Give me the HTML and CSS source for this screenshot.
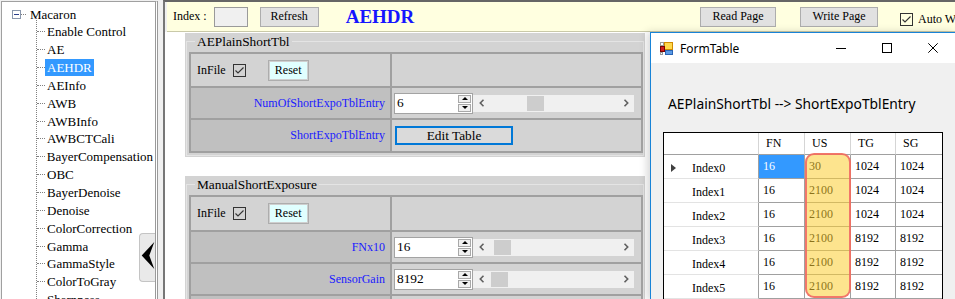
FILE: index.html
```html
<!DOCTYPE html>
<html>
<head>
<meta charset="utf-8">
<link rel="stylesheet" href="styles.css">
</head>
<body>
<div class="app">
  <aside class="tree">
    <div class="root"><span class="expander"></span><span class="hdots"></span><span class="tlabel">Macaron</span></div>
    <ul class="children">
      <li><span class="tlabel">Enable Control</span></li>
      <li><span class="tlabel">AE</span></li>
      <li class="sel"><span class="tlabel">AEHDR</span></li>
      <li><span class="tlabel">AEInfo</span></li>
      <li><span class="tlabel">AWB</span></li>
      <li><span class="tlabel">AWBInfo</span></li>
      <li><span class="tlabel">AWBCTCali</span></li>
      <li><span class="tlabel">BayerCompensation</span></li>
      <li><span class="tlabel">OBC</span></li>
      <li><span class="tlabel">BayerDenoise</span></li>
      <li><span class="tlabel">Denoise</span></li>
      <li><span class="tlabel">ColorCorrection</span></li>
      <li><span class="tlabel">Gamma</span></li>
      <li><span class="tlabel">GammaStyle</span></li>
      <li><span class="tlabel">ColorToGray</span></li>
      <li><span class="tlabel">Sharpness</span></li>
    </ul>
    <div class="collapse"><svg width="16" height="47" viewBox="0 0 16 47"><path d="M1.7 21.5 L14.3 8 L9.3 21.5 L14.3 35 Z" fill="#000"/></svg></div>
  </aside>
  <div class="splitter"></div>
  <main class="main">
    <div class="topbar">
      <span class="idx-label">Index :</span>
      <span class="idx-input"></span>
      <span class="btn btn-refresh">Refresh</span>
      <span class="page-title">AEHDR</span>
      <span class="btn btn-read">Read Page</span>
      <span class="btn btn-write">Write Page</span>
      <span class="cb auto-cb"><svg width="11" height="11" viewBox="0 0 11 11"><path d="M1.5 5.5 L4 8 L9.5 2.5" fill="none" stroke="#333" stroke-width="1.1"/></svg></span>
      <span class="auto-label">Auto Write</span>
    </div>
    <div class="content">
      <section class="group g1">
        <div class="group-title"><span>AEPlainShortTbl</span></div>
        <div class="ptable">
          <div class="cell c-info"><span class="infile">InFile</span><span class="cb"><svg width="11" height="11" viewBox="0 0 11 11"><path d="M1.5 5.5 L4 8 L9.5 2.5" fill="none" stroke="#333" stroke-width="1.1"/></svg></span><span class="reset">Reset</span></div>
          <div class="cell"></div>
          <div class="cell c-label">NumOfShortExpoTblEntry</div>
          <div class="cell c-value">
            <div class="num"><span class="num-val">6</span><span class="spin"><span class="spin-btn up"></span><span class="spin-btn down"></span></span></div>
            <div class="hscroll"><span class="sb-arrow"><svg width="6" height="8" viewBox="0 0 6 8"><path d="M4.5 0.8 L1.3 4 L4.5 7.2" fill="none" stroke="#606060" stroke-width="1.6"/></svg></span><span class="sb-track"><span class="sb-thumb" style="margin-left:37px"></span></span><span class="sb-arrow"><svg width="6" height="8" viewBox="0 0 6 8"><path d="M1.5 0.8 L4.7 4 L1.5 7.2" fill="none" stroke="#606060" stroke-width="1.6"/></svg></span></div>
          </div>
          <div class="cell c-label">ShortExpoTblEntry</div>
          <div class="cell c-value"><span class="edit-btn">Edit Table</span></div>
        </div>
      </section>
      <section class="group g2">
        <div class="group-title"><span>ManualShortExposure</span></div>
        <div class="ptable">
          <div class="cell c-info"><span class="infile">InFile</span><span class="cb"><svg width="11" height="11" viewBox="0 0 11 11"><path d="M1.5 5.5 L4 8 L9.5 2.5" fill="none" stroke="#333" stroke-width="1.1"/></svg></span><span class="reset">Reset</span></div>
          <div class="cell"></div>
          <div class="cell c-label">FNx10</div>
          <div class="cell c-value">
            <div class="num"><span class="num-val">16</span><span class="spin"><span class="spin-btn up"></span><span class="spin-btn down"></span></span></div>
            <div class="hscroll"><span class="sb-arrow"><svg width="6" height="8" viewBox="0 0 6 8"><path d="M4.5 0.8 L1.3 4 L4.5 7.2" fill="none" stroke="#606060" stroke-width="1.6"/></svg></span><span class="sb-track"><span class="sb-thumb" style="margin-left:4px"></span></span><span class="sb-arrow"><svg width="6" height="8" viewBox="0 0 6 8"><path d="M1.5 0.8 L4.7 4 L1.5 7.2" fill="none" stroke="#606060" stroke-width="1.6"/></svg></span></div>
          </div>
          <div class="cell c-label">SensorGain</div>
          <div class="cell c-value">
            <div class="num"><span class="num-val">8192</span><span class="spin"><span class="spin-btn up"></span><span class="spin-btn down"></span></span></div>
            <div class="hscroll"><span class="sb-arrow"><svg width="6" height="8" viewBox="0 0 6 8"><path d="M4.5 0.8 L1.3 4 L4.5 7.2" fill="none" stroke="#606060" stroke-width="1.6"/></svg></span><span class="sb-track"><span class="sb-thumb" style="margin-left:1px"></span></span><span class="sb-arrow"><svg width="6" height="8" viewBox="0 0 6 8"><path d="M1.5 0.8 L4.7 4 L1.5 7.2" fill="none" stroke="#606060" stroke-width="1.6"/></svg></span></div>
          </div>
          <div class="cell c-label"></div>
          <div class="cell c-value">
            <div class="num"><span class="num-val"></span><span class="spin"><span class="spin-btn up"></span><span class="spin-btn down"></span></span></div>
          </div>
        </div>
      </section>
    </div>
  </main>

  <div class="window">
    <div class="titlebar">
      <svg class="win-icon" width="13" height="13" viewBox="0 0 13 13">
        <rect x="0.5" y="0.5" width="3" height="3" fill="#fff" stroke="#9a9a9a"/>
        <rect x="4.5" y="0.5" width="8" height="7" fill="#ffd84a" stroke="#d08a00"/>
        <rect x="0.5" y="4.5" width="4" height="5" fill="#d01c1c" stroke="#7a0000"/>
        <rect x="5.5" y="8.5" width="7" height="4" fill="#5a9ae6" stroke="#2a64b4"/>
        <rect x="0.5" y="10.5" width="2" height="2" fill="#fff" stroke="#9a9a9a"/>
      </svg>
      <span class="win-title">FormTable</span>
      <div class="caption">
        <span class="cap-btn"><svg width="10" height="10" viewBox="0 0 10 10"><path d="M0 5.5 H10" stroke="#000" stroke-width="1"/></svg></span>
        <span class="cap-btn"><svg width="10" height="10" viewBox="0 0 10 10"><rect x="0.5" y="0.5" width="9" height="9" fill="none" stroke="#000" stroke-width="1"/></svg></span>
        <span class="cap-btn"><svg width="10" height="10" viewBox="0 0 10 10"><path d="M0.3 0.3 L9.7 9.7 M9.7 0.3 L0.3 9.7" stroke="#000" stroke-width="1"/></svg></span>
      </div>
    </div>
    <div class="client">
      <div class="win-label">AEPlainShortTbl --&gt; ShortExpoTblEntry</div>
      <div class="grid-wrap">
        <div class="grid">
          <div class="hc"></div><div class="hc">FN</div><div class="hc">US</div><div class="hc">TG</div><div class="hc last">SG</div>
          <div class="rh cur"><span class="arrow"></span>Index0</div><div class="dc sel">16</div><div class="dc">30</div><div class="dc">1024</div><div class="dc last">1024</div>
          <div class="rh">Index1</div><div class="dc">16</div><div class="dc">2100</div><div class="dc">1024</div><div class="dc last">1024</div>
          <div class="rh">Index2</div><div class="dc">16</div><div class="dc">2100</div><div class="dc">1024</div><div class="dc last">1024</div>
          <div class="rh">Index3</div><div class="dc">16</div><div class="dc">2100</div><div class="dc">8192</div><div class="dc last">8192</div>
          <div class="rh">Index4</div><div class="dc">16</div><div class="dc">2100</div><div class="dc">8192</div><div class="dc last">8192</div>
          <div class="rh">Index5</div><div class="dc">16</div><div class="dc">2100</div><div class="dc">8192</div><div class="dc last">8192</div>
        </div>
        <div class="hl"></div>
      </div>
    </div>
  </div>
</div>
</body>
</html>
```
FILE: styles.css
```css
* { box-sizing: border-box; }
html, body { margin: 0; padding: 0; }
body {
  width: 955px; height: 299px; overflow: hidden;
  font-family: "Liberation Serif", "Times New Roman", serif;
  font-size: 12px; color: #000; background: #f0f0f0;
}
.app { position: relative; display: flex; width: 955px; height: 299px; overflow: hidden; }

/* Tree */
.tree {
  position: relative; flex: none; width: 157px; height: 300px;
  margin: 1px 0 0 1px; padding-top: 3px;
  background: #fff;
  border-left: 1px solid #a0a0a0; border-top: 1px solid #a0a0a0;
  border-right: 3px double #9a9a9a;
  font-size: 13px; overflow: hidden;
}
.root { display: flex; align-items: center; height: 18px; padding-left: 10px; }
.expander { position: relative; width: 9px; height: 9px; border: 1px solid #8a97ac; background: #fff; }
.expander::after { content: ""; position: absolute; left: 1px; top: 3px; width: 5px; height: 1px; background: #2b3f8c; }
.hdots { width: 5px; border-top: 1px dotted #808080; margin-right: 2px; }
.children { list-style: none; margin: 0 0 0 34px; padding: 0; position: relative; }
.children::before { content: ""; position: absolute; left: 0; top: -5px; bottom: 0; border-left: 1px dotted #808080; }
.children li { display: flex; align-items: center; height: 17.85px; white-space: nowrap; }
.children li::before { content: ""; width: 8px; margin-left: 1px; border-top: 1px dotted #808080; }
.tlabel { padding: 0 2px; line-height: 17px; }
.sel .tlabel { background: #3399ff; color: #fff; }
.collapse {
  position: absolute; left: 137px; top: 231px; width: 16px; height: 49px;
  background: #e9e9e9; border: 1px solid #c4c4c4; border-right: none;
  border-radius: 4px 0 0 4px;
}
.collapse svg { display: block; }

.splitter { flex: none; width: 5px; background: #f0f0f0; }

/* Main */
.main {
  flex: 1; min-width: 0; display: flex; flex-direction: column;
  border-top: 2px solid #666; border-left: 2px solid #777; background: #f0f0f0;
}
.topbar {
  flex: none; display: flex; align-items: center; height: 30px; margin-left: 2px;
  padding-left: 6px; background: #ffffe0; border-bottom: 1px solid #c9c9a8;
  white-space: nowrap; font-size: 12px;
}
.idx-input { width: 34px; height: 20px; margin-left: 7px; background: #f0f0f0; border: 1px solid #9a9a9a; }
.btn {
  height: 20px; border: 1px solid #adadad; background: #e1e1e1;
  display: flex; align-items: center; justify-content: center; font-size: 12px;
}
.btn-refresh { width: 59px; margin-left: 12px; }
.page-title { margin-left: 27px; font-size: 19px; font-weight: bold; color: #1515ff; }
.btn-read { margin-left: auto; width: 76px; }
.btn-write { margin-left: 24px; width: 78px; }
.cb { flex: none; width: 13px; height: 13px; border: 1px solid #333; display: flex; align-items: center; justify-content: center; }
.auto-cb { margin-left: 22px; margin-top: 5px; }
.auto-label { width: 37px; overflow: hidden; margin-left: 5px; margin-top: 5px; }

.content { flex: 1; background: #fff; padding: 1px 0 0 20px; overflow: hidden; }

.group { position: relative; width: 460px; background: #d3d3d3; padding: 0 2px 4px 4px; }
.group + .group { margin-top: 19px; }
.group::before {
  content: ""; position: absolute; z-index: 0; left: 1px; right: 1px; top: 8px; bottom: 1px;
  border: 1px solid #e4e4e4;
}
.group-title { position: relative; z-index: 1; height: 19px; padding-left: 6px; font-size: 13.33px; line-height: 17px; }
.group-title span { background: #d3d3d3; padding: 0 2px; }
.ptable {
  position: relative; z-index: 1;
  display: grid; grid-template-columns: 199px 249px; gap: 2px; padding: 2px;
  width: 454px; background: #a0a0a0;
}
.g1 .ptable { grid-template-rows: 32px 30px 31px; }
.g2 .ptable { grid-template-rows: 33px 30px 30px 30px; }
.cell { display: flex; align-items: center; background: #d3d3d3; min-width: 0; overflow: hidden; white-space: nowrap; }
.c-label { background: #c0c0c0; justify-content: flex-end; padding-right: 5px; color: #1a1aff; font-size: 12px; }
.c-info { padding-left: 6px; }
.c-info .cb { margin-left: 7px; }
.reset {
  margin-left: 22px; width: 41px; height: 21px;
  border: 1px solid #adadad; box-shadow: inset 0 0 0 1px #cfcfcf; background: #e0ffff;
  display: flex; align-items: center; justify-content: center; font-size: 12px;
}
.c-value { padding-left: 2px; }
.num { flex: none; display: flex; width: 79px; height: 21px; border: 1px solid #a3a3a3; background: #fff; }
.num-val { flex: 1; font-size: 13.33px; line-height: 16px; padding: 1px 0 0 2px; }
.spin { width: 14px; display: flex; flex-direction: column; gap: 1px; padding: 1px 1px 1px 0; }
.spin-btn { flex: 1; background: #f0f0f0; border: 1px solid #a8a8a8; display: flex; align-items: center; justify-content: center; }
.spin-btn.up::after { content: ""; border-left: 3px solid transparent; border-right: 3px solid transparent; border-bottom: 3px solid #000; }
.spin-btn.down::after { content: ""; border-left: 3px solid transparent; border-right: 3px solid transparent; border-top: 3px solid #000; }
.hscroll { flex: none; display: flex; width: 161px; height: 17px; background: #f0f0f0; }
.sb-arrow { flex: none; width: 17px; display: flex; align-items: center; justify-content: center; }
.sb-track { flex: 1; display: flex; align-items: center; }
.sb-thumb { width: 17px; height: 15px; background: #cdcdcd; }
.edit-btn {
  margin-left: 1px; width: 118px; height: 19px; border: 2px solid #0078d7; background: #dadada;
  display: flex; align-items: center; justify-content: center; font-size: 13.33px;
}

/* Floating window */
.window {
  position: absolute; left: 650px; top: 32px; width: 306px; height: 268px;
  background: #f0f0f0; border-left: 1px solid #1883d7; border-top: 1px solid #1883d7;
  box-shadow: -3px 0 8px rgba(0,0,0,0.16);
  font-family: "Noto Sans", "Open Sans", sans-serif;
}
.titlebar { display: flex; align-items: center; height: 30px; background: #fff; }
.win-icon { margin-left: 9px; flex: none; }
.win-title { margin-left: 7px; font-size: 12px; }
.caption { margin-left: auto; display: flex; }
.cap-btn { width: 46px; height: 30px; display: flex; align-items: center; justify-content: center; }
.client { padding: 32px 0 0 12px; }
.win-label { padding-left: 5px; font-size: 13.8px; line-height: 18px; white-space: nowrap; }
.grid-wrap {
  position: relative; margin-top: 19px; width: 280px; border: 1px solid #000; background: #fff;
  font-family: "Liberation Serif", "Times New Roman", serif; font-size: 12px;
}
.grid { display: grid; grid-template-columns: 95px 46px 46px 45px 46px; grid-template-rows: 22px repeat(6, 24px); }
.hc { display: flex; align-items: center; padding-left: 7px; border-right: 1px solid #d5d5d5; border-bottom: 1px solid #a0a0a0; }
.rh { display: flex; align-items: center; padding: 3px 0 0 28px; border-right: 1px solid #a0a0a0; border-bottom: 1px solid #e3e3e3; }
.rh.cur { padding-left: 7px; }
.arrow { width: 0; height: 0; border-top: 4px solid transparent; border-bottom: 4px solid transparent; border-left: 5px solid #404040; margin-right: 16px; margin-top: -1px; }
.dc { display: flex; align-items: center; padding-left: 4px; border-right: 1px solid #a0a0a0; border-bottom: 1px solid #a0a0a0; }
.hc.last, .dc.last { border-right: none; }
.dc.sel { background: #3399ff; color: #fff; }
.hl {
  position: absolute; left: 141px; top: 20px; width: 46px; height: 145px;
  border: 2px solid rgba(240,100,100,0.85); border-radius: 9px;
  background: rgba(251,206,50,0.55);
}
```
